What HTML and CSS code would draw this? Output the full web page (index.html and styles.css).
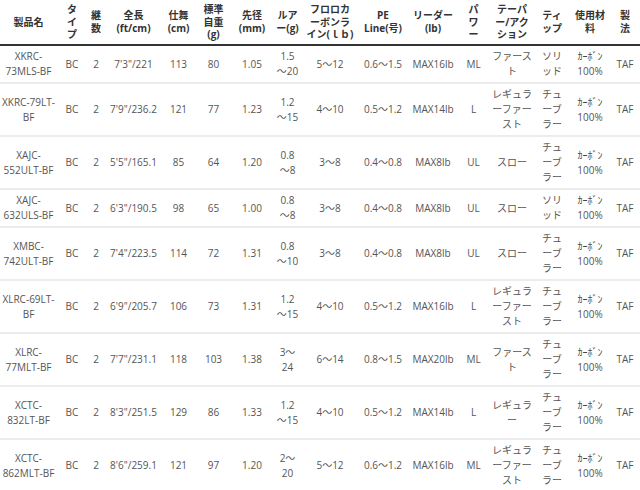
FILE: index.html
```html
<!DOCTYPE html>
<html lang="ja">
<head>
<meta charset="utf-8">
<link rel="stylesheet" href="styles.css">
</head>
<body>
<table class="spec">
<colgroup>
<col class="c1"><col class="c2"><col class="c3"><col class="c4"><col class="c5"><col class="c6"><col class="c7"><col class="c8"><col class="c9"><col class="c10"><col class="c11"><col class="c12"><col class="c13"><col class="c14"><col class="c15"><col class="c16">
</colgroup>
<thead>
<tr>
<th>製品名</th><th>タ<br>イ<br>プ</th><th>継<br>数</th><th>全長<br>(ft/cm)</th><th>仕舞<br>(cm)</th><th>標準<br>自重<br>(g)</th><th>先径<br>(mm)</th><th>ルア<br>ー(g)</th><th>フロロカ<br>ーボンラ<br>イン(ｌｂ)</th><th>PE<br>Line(号)</th><th>リーダー<br>(lb)</th><th>パ<br>ワ<br>ー</th><th>テーパ<br>ー/アク<br>ション</th><th>ティ<br>ップ</th><th>使用材<br>料</th><th>製<br>法</th>
</tr>
</thead>
<tbody>
<tr><td>XKRC-<br>73MLS-BF</td><td>BC</td><td>2</td><td>7'3"/221</td><td>113</td><td>80</td><td>1.05</td><td>1.5<br>～20</td><td>5～12</td><td>0.6～1.5</td><td>MAX16lb</td><td>ML</td><td>ファース<br>ト</td><td>ソリ<br>ッド</td><td><span class="hw">ｶｰﾎﾞﾝ</span><br>100%</td><td>TAF</td></tr>
<tr><td>XKRC-79LT-<br>BF</td><td>BC</td><td>2</td><td>7'9"/236.2</td><td>121</td><td>77</td><td>1.23</td><td>1.2<br>～15</td><td>4～10</td><td>0.5～1.2</td><td>MAX14lb</td><td>L</td><td>レギュラ<br>ーファー<br>スト</td><td>チュ<br>ーブ<br>ラー</td><td><span class="hw">ｶｰﾎﾞﾝ</span><br>100%</td><td>TAF</td></tr>
<tr><td>XAJC-<br>552ULT-BF</td><td>BC</td><td>2</td><td>5'5"/165.1</td><td>85</td><td>64</td><td>1.20</td><td>0.8<br>～8</td><td>3～8</td><td>0.4～0.8</td><td>MAX8lb</td><td>UL</td><td>スロー</td><td>チュ<br>ーブ<br>ラー</td><td><span class="hw">ｶｰﾎﾞﾝ</span><br>100%</td><td>TAF</td></tr>
<tr><td>XAJC-<br>632ULS-BF</td><td>BC</td><td>2</td><td>6'3"/190.5</td><td>98</td><td>65</td><td>1.00</td><td>0.8<br>～8</td><td>3～8</td><td>0.4～0.8</td><td>MAX8lb</td><td>UL</td><td>スロー</td><td>ソリ<br>ッド</td><td><span class="hw">ｶｰﾎﾞﾝ</span><br>100%</td><td>TAF</td></tr>
<tr><td>XMBC-<br>742ULT-BF</td><td>BC</td><td>2</td><td>7'4"/223.5</td><td>114</td><td>72</td><td>1.31</td><td>0.8<br>～10</td><td>3～8</td><td>0.4～0.8</td><td>MAX8lb</td><td>UL</td><td>スロー</td><td>チュ<br>ーブ<br>ラー</td><td><span class="hw">ｶｰﾎﾞﾝ</span><br>100%</td><td>TAF</td></tr>
<tr><td>XLRC-69LT-<br>BF</td><td>BC</td><td>2</td><td>6'9"/205.7</td><td>106</td><td>73</td><td>1.31</td><td>1.2<br>～15</td><td>4～10</td><td>0.5～1.2</td><td>MAX16lb</td><td>L</td><td>レギュラ<br>ーファー<br>スト</td><td>チュ<br>ーブ<br>ラー</td><td><span class="hw">ｶｰﾎﾞﾝ</span><br>100%</td><td>TAF</td></tr>
<tr><td>XLRC-<br>77MLT-BF</td><td>BC</td><td>2</td><td>7'7"/231.1</td><td>118</td><td>103</td><td>1.38</td><td>3～<br>24</td><td>6～14</td><td>0.8～1.5</td><td>MAX20lb</td><td>ML</td><td>ファース<br>ト</td><td>チュ<br>ーブ<br>ラー</td><td><span class="hw">ｶｰﾎﾞﾝ</span><br>100%</td><td>TAF</td></tr>
<tr><td>XCTC-<br>832LT-BF</td><td>BC</td><td>2</td><td>8'3"/251.5</td><td>129</td><td>86</td><td>1.33</td><td>1.2<br>～15</td><td>4～10</td><td>0.5～1.2</td><td>MAX14lb</td><td>L</td><td>レギュラ<br>ー</td><td>チュ<br>ーブ<br>ラー</td><td><span class="hw">ｶｰﾎﾞﾝ</span><br>100%</td><td>TAF</td></tr>
<tr><td>XCTC-<br>862MLT-BF</td><td>BC</td><td>2</td><td>8'6"/259.1</td><td>121</td><td>97</td><td>1.20</td><td>2～<br>20</td><td>5～12</td><td>0.6～1.2</td><td>MAX16lb</td><td>ML</td><td>レギュラ<br>ーファー<br>スト</td><td>チュ<br>ーブ<br>ラー</td><td><span class="hw">ｶｰﾎﾞﾝ</span><br>100%</td><td>TAF</td></tr>
</tbody>
</table>
</body>
</html>
```
FILE: styles.css
```css
html, body {
  margin: 0;
  padding: 0;
  background: #fff;
}
body {
  font-family: "Open Sans", "Noto Sans CJK JP", sans-serif;
  font-size: 10px;
  color: #555;
}
.spec {
  width: 640px;
  table-layout: fixed;
  border-collapse: collapse;
}
.c1 { width: 57px; }
.c2 { width: 30px; }
.c3 { width: 18px; }
.c4 { width: 57px; }
.c5 { width: 33px; }
.c6 { width: 37px; }
.c7 { width: 40px; }
.c8 { width: 31px; }
.c9 { width: 54px; }
.c10 { width: 52px; }
.c11 { width: 48px; }
.c12 { width: 33px; }
.c13 { width: 44px; }
.c14 { width: 36px; }
.c15 { width: 40px; }
.c16 { width: 30px; }
.spec th,
.spec td {
  padding: 3px 0;
  text-align: center;
  vertical-align: middle;
  white-space: nowrap;
  overflow: visible;
}
.spec th {
  font-weight: 700;
  color: #333;
  line-height: 12.67px;
  border-bottom: 2px solid #333;
}
.spec td {
  line-height: 15px;
  border-bottom: 2px solid #ececec;
}
.hw {
  font-size: 10px;
  color: #444;
}
```
